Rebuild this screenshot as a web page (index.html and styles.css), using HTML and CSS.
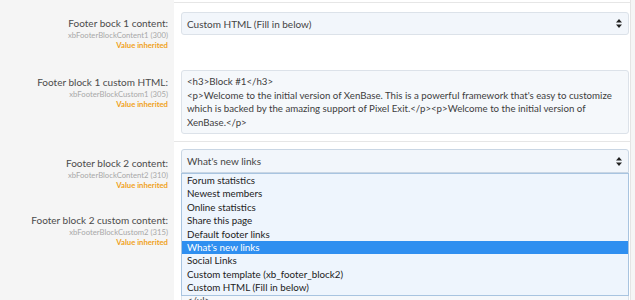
FILE: index.html
```html
<!DOCTYPE html>
<html lang="en">
<head>
  <meta charset="UTF-8">
  <title>Footer Options</title>
  <link rel="stylesheet" href="styles.css">
</head>
<body>

<div class="options">
  <div class="row row-stub">
    <div class="row-label"></div>
    <div class="row-input"></div>
  </div>

  <div class="row row-first">
    <div class="row-label">
      <label>Footer bock 1 content:</label>
      <div class="hint">xbFooterBlockContent1 (300)</div>
      <div class="inherited">Value inherited</div>
    </div>
    <div class="row-input">
      <div class="select">
        <span>Custom HTML (Fill in below)</span>
        <svg class="arrows" width="6" height="9" viewBox="0 0 6 9"><path d="M3 0L6 3.6H0Z M3 9L6 5.4H0Z" fill="#222"/></svg>
      </div>
    </div>
  </div>

  <div class="row row-html">
    <div class="row-label">
      <label>Footer block 1 custom HTML:</label>
      <div class="hint">xbFooterBlockCustom1 (305)</div>
      <div class="inherited">Value inherited</div>
    </div>
    <div class="row-input">
<textarea class="code" rows="4" readonly>&lt;h3&gt;Block #1&lt;/h3&gt;
&lt;p&gt;Welcome to the initial version of XenBase. This is a powerful framework that's easy to customize
which is backed by the amazing support of Pixel Exit.&lt;/p&gt;&lt;p&gt;Welcome to the initial version of
XenBase.&lt;/p&gt;</textarea>
    </div>
  </div>

  <div class="row row-sep row-open">
    <div class="row-label">
      <label>Footer block 2 content:</label>
      <div class="hint">xbFooterBlockContent2 (310)</div>
      <div class="inherited">Value inherited</div>
    </div>
    <div class="row-input">
      <div class="select select-open">
        <span>What's new links</span>
        <svg class="arrows" width="6" height="9" viewBox="0 0 6 9"><path d="M3 0L6 3.6H0Z M3 9L6 5.4H0Z" fill="#222"/></svg>
      </div>
      <ul class="dropdown">
        <li>Forum statistics</li>
        <li>Newest members</li>
        <li>Online statistics</li>
        <li>Share this page</li>
        <li>Default footer links</li>
        <li class="active">What's new links</li>
        <li>Social Links</li>
        <li>Custom template (xb_footer_block2)</li>
        <li>Custom HTML (Fill in below)</li>
      </ul>
    </div>
  </div>

  <div class="row row-last">
    <div class="row-label">
      <label>Footer block 2 custom content:</label>
      <div class="hint">xbFooterBlockCustom2 (315)</div>
      <div class="inherited">Value inherited</div>
    </div>
    <div class="row-input">
<textarea class="code" rows="7" readonly>&lt;h3&gt;Block #2&lt;/h3&gt;
&lt;ul&gt;
&lt;li&gt;&lt;a href="#"&gt;Link one&lt;/a&gt;&lt;/li&gt;
&lt;li&gt;&lt;a href="#"&gt;Link two&lt;/a&gt;&lt;/li&gt;
&lt;li&gt;&lt;a href="#"&gt;Link three&lt;/a&gt;&lt;/li&gt;
&lt;li&gt;&lt;a href="#"&gt;Link four&lt;/a&gt;&lt;/li&gt;
&lt;/ul&gt;</textarea>
    </div>
  </div>
</div>

</body>
</html>
```

FILE: styles.css
```css
body { margin: 0; background: #f5f5f5; font-family: Lato, "Open Sans", Arial, sans-serif; color: #4a4a4a; overflow: hidden; }
.options { width: 631px; }
.row { display: grid; grid-template-columns: 174px 457px; }
.row-label { text-align: right; padding: 14px 6px 0 0; }
.row-input { background: #fff; border-right: 1px solid #e4e4e4; padding: 9px 0 0 7px; position: relative; }
.row-stub .row-label, .row-stub .row-input { height: 2px; padding: 0; }
.row-first .row-input { border-top: 1px solid #e6e6e6; padding-bottom: 26px; }
.row-html .row-input { padding-bottom: 7px; }
.row-sep .row-input { border-top: 1px solid #e6e6e6; padding-top: 7px; }
.row-sep .row-label { padding-top: 15px; }
.row-open .row-input { padding-bottom: 26px; }
.row-open .select { height: 24px; }
.row-last .row-input { height: 120px; }

label { display: block; font-size: 10px; line-height: 14px; color: #4b4b4b; }
.hint { font-size: 7.7px; line-height: 10px; color: #a8a8a8; }
.inherited { font-size: 7.7px; line-height: 10px; color: #f0a21c; font-weight: bold; }

.select { box-sizing: border-box; width: 448px; height: 23px; display: flex; align-items: center; justify-content: space-between; padding: 0 6px 0 5px; background: #f2f6fb; border: 1px solid #dce2e9; border-radius: 3px; font-size: 10px; color: #444; }
.select-open { border-color: #c9d6e4; border-radius: 3px 3px 0 0; }
.arrows { display: block; }

.code { display: block; box-sizing: border-box; width: 448px; margin: 0; padding: 4px 5px; background: #f5f8fb; border: 1px solid #dce2e9; border-radius: 3px; font-family: inherit; font-size: 9.7px; line-height: 13.5px; color: #3d3d3d; white-space: pre; overflow: hidden; resize: none; }
.row-last .code { height: 104px; }

.dropdown { position: absolute; left: 7px; top: 31px; z-index: 2; box-sizing: border-box; width: 448px; margin: 0; padding: 0; list-style: none; background: #eef5fd; border: 1px solid #a8c4e0; font-size: 9.8px; color: #222; }
.dropdown li { height: 13.4px; line-height: 13.4px; padding-left: 5px; }
.dropdown li.active { background: #2f8ff0; color: #fff; }
```
